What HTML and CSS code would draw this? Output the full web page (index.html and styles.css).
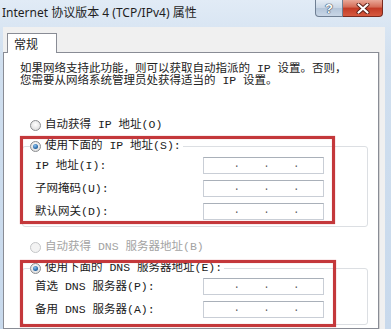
FILE: index.html
```html
<!DOCTYPE html>
<html lang="zh-CN">
<head>
<meta charset="utf-8">
<title>Internet 协议版本 4 (TCP/IPv4) 属性</title>
<link rel="stylesheet" href="styles.css">
</head>
<body>
<div class="window">
  <div class="titlebar">
    <span class="title">Internet 协议版本 4 (TCP/IPv4) 属性</span>
    <div class="caption-btns">
      <span class="cbtn help">?</span>
      <span class="cbtn close">
        <svg width="14" height="11" viewBox="0 0 14 11">
          <path d="M2.5 1.5 L11.5 9.5 M11.5 1.5 L2.5 9.5" stroke="#5a1f18" stroke-width="4" stroke-linecap="round"/>
          <path d="M2.5 1.5 L11.5 9.5 M11.5 1.5 L2.5 9.5" stroke="#ffffff" stroke-width="2.2" stroke-linecap="round"/>
        </svg>
      </span>
    </div>
  </div>
  <div class="client">
    <div class="tabs"><span class="tab">常规</span></div>
    <div class="panel">
      <p class="intro">如果网络支持此功能，则可以获取自动指派的 IP 设置。否则，<br>您需要从网络系统管理员处获得适当的 IP 设置。</p>
      <div class="radio-row first"><span class="radio"></span><span>自动获得 IP 地址(O)</span></div>
      <div class="group g1">
        <div class="legend"><span class="radio checked"></span><span>使用下面的 IP 地址(S):</span></div>
        <div class="field"><span class="label">IP 地址(I):</span><span class="ipbox"><span class="seg"></span><span class="dot">.</span><span class="seg"></span><span class="dot">.</span><span class="seg"></span><span class="dot">.</span><span class="seg"></span></span></div>
        <div class="field"><span class="label">子网掩码(U):</span><span class="ipbox"><span class="seg"></span><span class="dot">.</span><span class="seg"></span><span class="dot">.</span><span class="seg"></span><span class="dot">.</span><span class="seg"></span></span></div>
        <div class="field"><span class="label">默认网关(D):</span><span class="ipbox"><span class="seg"></span><span class="dot">.</span><span class="seg"></span><span class="dot">.</span><span class="seg"></span><span class="dot">.</span><span class="seg"></span></span></div>
      </div>
      <div class="radio-row disabled"><span class="radio"></span><span>自动获得 DNS 服务器地址(B)</span></div>
      <div class="group g2">
        <div class="legend"><span class="radio checked"></span><span>使用下面的 DNS 服务器地址(E):</span></div>
        <div class="field"><span class="label">首选 DNS 服务器(P):</span><span class="ipbox"><span class="seg"></span><span class="dot">.</span><span class="seg"></span><span class="dot">.</span><span class="seg"></span><span class="dot">.</span><span class="seg"></span></span></div>
        <div class="field"><span class="label">备用 DNS 服务器(A):</span><span class="ipbox"><span class="seg"></span><span class="dot">.</span><span class="seg"></span><span class="dot">.</span><span class="seg"></span><span class="dot">.</span><span class="seg"></span></span></div>
      </div>
      <div class="mark mark1"></div>
      <div class="mark mark2"></div>
    </div>
  </div>
</div>
</body>
</html>
```
FILE: styles.css
```css
* { box-sizing: border-box; }
html, body { margin: 0; padding: 0; }
body {
  width: 391px;
  height: 329px;
  overflow: hidden;
  background: #cfdff0;
}
.window {
  width: 391px;
  height: 329px;
  overflow: hidden;
  background: linear-gradient(#e1ebf6, #d0dfef 60px, #c8d9ec);
  font-family: "Liberation Mono", "Noto Sans CJK SC", monospace;
  font-size: 11.5px;
  color: #1b1b1b;
}
.titlebar {
  height: 27px;
  display: flex;
  align-items: flex-start;
}
.title {
  font-family: "Noto Sans", "Noto Sans CJK SC", sans-serif;
  font-size: 12px;
  line-height: 26px;
  padding-left: 2px;
  color: #1e1e1e;
  white-space: nowrap;
}
.caption-btns {
  margin-left: auto;
  margin-right: 8px;
  display: flex;
}
.cbtn {
  height: 17px;
  display: flex;
  align-items: center;
  justify-content: center;
  border: 1px solid #6f7f93;
  border-top: none;
}
.help {
  width: 28px;
  border-radius: 0 0 0 4px;
  background: linear-gradient(#e4ecf5, #c9d6e5 50%, #b4c5d9 51%, #c8d6e6);
  font-family: "Liberation Sans", sans-serif;
  font-weight: bold;
  font-size: 13px;
  color: #ffffff;
  text-shadow: 0 0 1px #2b3f57, 0 0 1px #2b3f57, 0 0 1px #2b3f57;
  line-height: 1;
}
.close {
  width: 40px;
  border-left: none;
  border-color: #7a2a1f;
  border-radius: 0 0 4px 0;
  background: linear-gradient(#e9a898, #d46a55 45%, #c23a25 50%, #d65a40);
}
.client {
  margin-left: 3px;
  margin-right: 6px;
  height: 302px;
  background: #f0f0f0;
  padding-top: 6px;
  display: flex;
  flex-direction: column;
}
.tabs {
  display: flex;
  padding-left: 4px;
  height: 20px;
  margin-bottom: -1px;
  position: relative;
  z-index: 1;
}
.tab {
  width: 50px;
  height: 20px;
  background: #ffffff;
  border: 1px solid #898c95;
  border-bottom: none;
  font-family: "Noto Sans CJK SC", sans-serif;
  font-size: 12px;
  line-height: 19px;
  padding-left: 6px;
  color: #1e1e1e;
}
.panel {
  position: relative;
  width: 376px;
  flex: 1;
  background: #ffffff;
  border: 1px solid #898c95;
  box-shadow: 1px 0 0 #d4d4d4;
  padding-left: 16px;
}
.intro {
  margin: 10px 0 0 0;
  line-height: 12px;
  white-space: nowrap;
  color: #222;
}
.radio-row {
  display: flex;
  align-items: center;
  height: 16px;
  line-height: 16px;
  margin-left: 10px;
  white-space: nowrap;
}
.radio-row.first { margin-top: 30px; }
.radio-row.disabled { margin-top: 12px; color: #a3a3a3; }
.radio {
  width: 11px;
  height: 11px;
  border-radius: 50%;
  border: 1px solid #8b8d90;
  background: radial-gradient(circle at 50% 40%, #ffffff, #e2e2e2 70%, #cfcfcf);
  margin-right: 4px;
  flex: none;
  display: flex;
  align-items: center;
  justify-content: center;
}
.radio.checked::after {
  content: "";
  width: 5px;
  height: 5px;
  border-radius: 50%;
  background: radial-gradient(circle at 40% 35%, #8cc3f0, #2a6aa8 60%, #1b4d80);
}
.disabled .radio {
  border-color: #c4c6c8;
  background: #f3f3f3;
}
.group {
  margin-left: 2px;
  width: 346px;
  border: 1px solid #dcdfe3;
  border-radius: 3px;
  padding-left: 12px;
  padding-bottom: 6px;
}
.g1 { margin-top: 13px; }
.g2 { margin-top: 13px; }
.legend {
  display: flex;
  width: fit-content;
  align-items: center;
  height: 16px;
  line-height: 16px;
  margin-top: -9px;
  margin-left: -5px;
  padding-right: 2px;
  background: #ffffff;
  white-space: nowrap;
}
.field {
  display: flex;
  align-items: center;
  height: 17px;
  margin-top: 6px;
}
.g1 .legend + .field { margin-top: 3px; }
.g2 .legend + .field { margin-top: 2px; }
.label {
  width: 168px;
  white-space: nowrap;
  line-height: 17px;
}
.ipbox {
  width: 121px;
  height: 17px;
  border: 1px solid #c9ced6;
  border-top-color: #a9b0b9;
  display: flex;
  padding-left: 3px;
  background: #ffffff;
}
.seg { width: 28px; }
.dot {
  width: 3px;
  font-size: 10px;
  line-height: 14px;
  color: #555;
  text-align: center;
}
.mark {
  position: absolute;
  border: 3px solid #c4383b;
  box-shadow: 0 0 1px rgba(196, 56, 59, 0.6), inset 0 0 1px rgba(196, 56, 59, 0.6);
  pointer-events: none;
}
.mark1 { left: 16px; top: 83px; width: 315px; height: 88px; }
.mark2 { left: 16px; top: 207px; width: 316px; height: 67px; }
```
